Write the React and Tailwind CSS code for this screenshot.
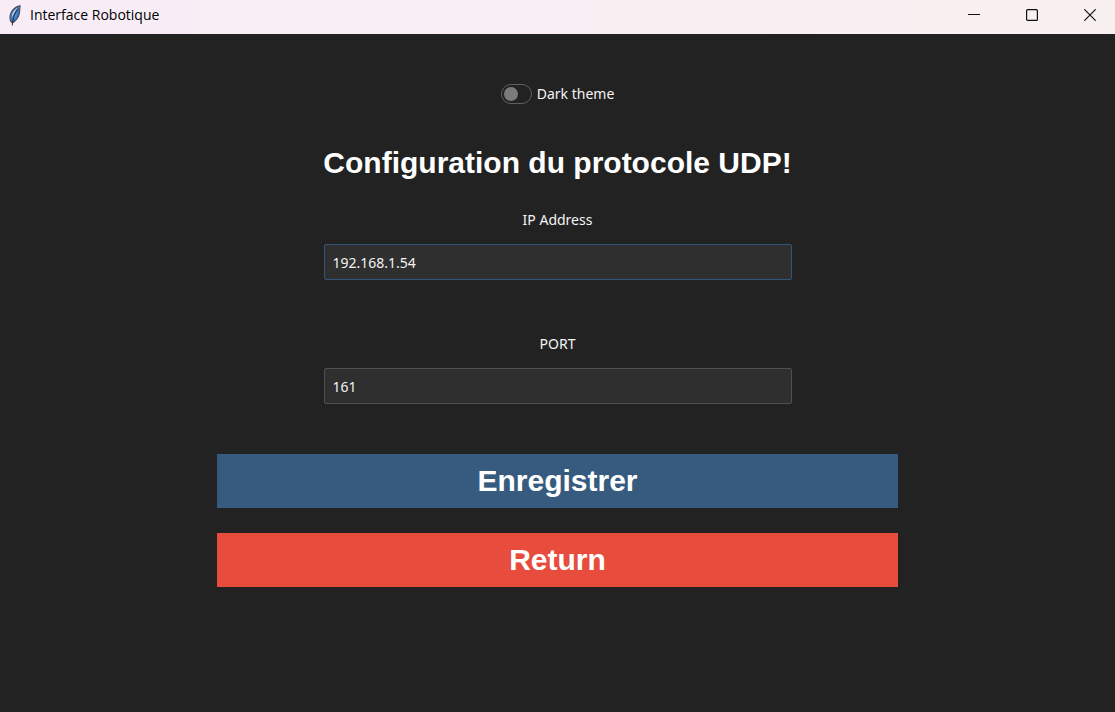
import { useState } from "react";

function FeatherIcon() {
  return (
    <svg className="h-6 w-3" viewBox="0 0 12 24" aria-hidden="true">
      <path d="M11 2.800C8 3.300 4 6 2.200 9.500C.8 12.500.8 16 1.900 18.500l1.300 1.300 1.300-.6C7.500 17 9.800 14 10.300 10.500c.5-2.500.3-5 .7-7.700z" fill="#3d77bd" stroke="#4b4d54" strokeWidth="1.200" />
      <path d="M9.500 4.500C6 6 3.800 8.500 3 11.500l-.3 4C4.500 11 6.500 7.500 9.500 4.500z" fill="#a9cdf2" />
      <path d="M8.500 8.500c-.4 3-1.700 5.800-3.800 7.800.5-3 1.900-5.500 3.800-7.800z" fill="#4d93e0" />
      <path d="M9.300 5.500C6 9.500 3.900 14 3.300 22.500" fill="none" stroke="#1c2028" strokeWidth="0.900" />
    </svg>
  );
}

function WindowButton({ label, children }) {
  return (
    <button type="button" aria-label={label} className="flex h-7 w-[58px] items-center justify-center">
      <svg className="size-3" viewBox="0 0 12 12" fill="none" stroke="#111" strokeWidth="1" aria-hidden="true">
        {children}
      </svg>
    </button>
  );
}

function TitleBar() {
  return (
    <header className="flex h-[34px] shrink-0 items-start justify-between bg-linear-to-r from-[#f8edf7] to-[#f8f0f0] pt-px pl-[9px] text-black">
      <div className="flex h-7 items-center gap-[9px]">
        <FeatherIcon />
        <span className="font-['Open_Sans','Noto_Sans',sans-serif] text-[14px] leading-5">Interface Robotique</span>
      </div>
      <div className="-mr-1 flex">
        <WindowButton label="Minimize">
          <path d="M0 5.500h12" />
        </WindowButton>
        <WindowButton label="Maximize">
          <rect x="0.600" y="0.600" width="10.800" height="10.800" rx="1" strokeWidth="1.200" />
        </WindowButton>
        <WindowButton label="Close">
          <path d="M0.300 0.300l11.400 11.400M11.700 0.300L0.300 11.700" strokeWidth="1.200" />
        </WindowButton>
      </div>
    </header>
  );
}

function Field({ id, label, value, onChange, active }) {
  return (
    <div className="flex w-[468px] max-w-full flex-col items-center gap-[14px]">
      <label htmlFor={id} className="text-[14px] leading-5">{label}</label>
      <input
        id={id}
        type="text"
        value={value}
        onChange={(e) => onChange(e.target.value)}
        className={
          "h-9 w-full rounded-[2px] border bg-[#2f2f2f] px-2 text-[14px] leading-5 outline-none " +
          (active ? "border-[#33557a]" : "border-[#505050] focus:border-[#33557a]")
        }
      />
    </div>
  );
}

export default function App() {
  const [dark, setDark] = useState(false);
  const [ip, setIp] = useState("192.168.1.54");
  const [port, setPort] = useState("161");

  return (
    <div className="flex min-h-screen flex-col bg-[#222222] font-['Noto_Sans','Open_Sans',sans-serif] text-[#f4f4f4]">
      <TitleBar />
      <main className="flex flex-1 flex-col items-center px-4 pt-[50px]">
        <label className="flex h-5 items-center gap-[5px] text-[14px] leading-5">
          <input
            type="checkbox"
            checked={dark}
            onChange={(e) => setDark(e.target.checked)}
            className="flex h-5 w-[31px] appearance-none items-center rounded-full border border-[#606060] px-[2px] before:size-[14px] before:rounded-full before:bg-[#7b7b7b] checked:justify-end"
          />
          Dark theme
        </label>
        <h1 className="mt-[39px] text-center font-['Liberation_Sans',Arial,sans-serif] text-[30px] leading-10 font-bold text-white">
          Configuration du protocole UDP!
        </h1>
        <form className="mt-[27px] flex w-[681px] max-w-full flex-col items-center" onSubmit={(e) => e.preventDefault()}>
          <Field id="ip" label="IP Address" value={ip} onChange={setIp} active />
          <div className="mt-[54px] flex w-full justify-center">
            <Field id="port" label="PORT" value={port} onChange={setPort} />
          </div>
          <div className="mt-[50px] flex w-full flex-col gap-[25px] font-['Liberation_Sans',Arial,sans-serif] text-[30px] leading-10 font-bold text-white">
            <button type="submit" className="h-[54px] bg-[#375a7f]">Enregistrer</button>
            <button type="button" className="h-[54px] bg-[#e74c3c]">Return</button>
          </div>
        </form>
      </main>
    </div>
  );
}
